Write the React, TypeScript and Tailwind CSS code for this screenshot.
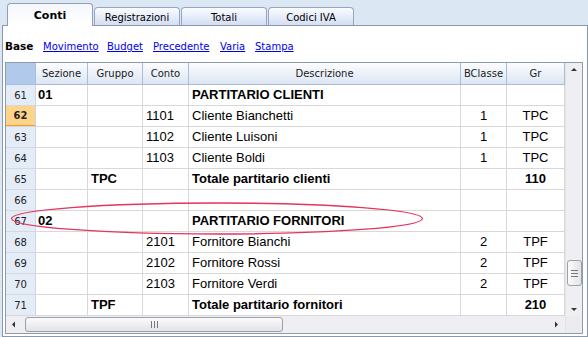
type Row = {
  n: number;
  sez?: string;
  grp?: string;
  conto?: string;
  desc?: string;
  bc?: string;
  gr?: string;
  bold?: boolean;
  sel?: boolean;
};

const rows: Row[] = [
  { n: 61, sez: "01", desc: "PARTITARIO CLIENTI", bold: true },
  { n: 62, conto: "1101", desc: "Cliente Bianchetti", bc: "1", gr: "TPC", sel: true },
  { n: 63, conto: "1102", desc: "Cliente Luisoni", bc: "1", gr: "TPC" },
  { n: 64, conto: "1103", desc: "Cliente Boldi", bc: "1", gr: "TPC" },
  { n: 65, grp: "TPC", desc: "Totale partitario clienti", gr: "110", bold: true },
  { n: 66 },
  { n: 67, sez: "02", desc: "PARTITARIO FORNITORI", bold: true },
  { n: 68, conto: "2101", desc: "Fornitore Bianchi", bc: "2", gr: "TPF" },
  { n: 69, conto: "2102", desc: "Fornitore Rossi", bc: "2", gr: "TPF" },
  { n: 70, conto: "2103", desc: "Fornitore Verdi", bc: "2", gr: "TPF" },
  { n: 71, grp: "TPF", desc: "Totale partitario fornitori", gr: "210", bold: true },
];

const ui = "font-['DejaVu_Sans',sans-serif] text-[10px]";
const cell = "h-full shrink-0 border-r border-[#d8d8d8] flex items-center";
const link = "text-[#0000ee] underline";

const Tab = ({ label, active }: { label: string; active?: boolean }) =>
  active ? (
    <div className="relative z-10 -mb-px flex h-[23px] w-[86px] items-start justify-center rounded-t-[4px] border border-b-0 border-[#919fb8] bg-gradient-to-b from-[#f4f7fc] to-white pt-[4px] text-[11px] font-bold text-black">
      {label}
    </div>
  ) : (
    <div className="ml-px flex h-[18px] w-[86px] items-center justify-center rounded-t-[4px] border border-b-0 border-[#97a6c0] bg-gradient-to-b from-[#fbfcff] to-[#d3def3] pt-px text-black">
      {label}
    </div>
  );

const Head = ({ w, label }: { w: string; label: string }) => (
  <div className={`${w} flex h-full shrink-0 items-center justify-center border-r border-[#a8bed8] text-[#1b1b1b]`}>
    {label}
  </div>
);

export default function App() {
  return (
    <div className={`relative h-[337px] w-[588px] overflow-hidden bg-[#dce7f4] ${ui}`}>
      {/* tabs */}
      <div className="flex h-[25px] items-end pl-[7px]">
        <Tab label="Conti" active />
        <Tab label="Registrazioni" />
        <Tab label="Totali" />
        <Tab label="Codici IVA" />
      </div>

      {/* panel */}
      <div className="ml-[2px] h-[312px] w-[586px] border border-[#8b97aa] bg-white">
        <div className="flex h-[36px] items-center pl-[2px] pt-[5px] text-[10px]">
          <span className="w-[38px] shrink-0 text-[10.5px] font-bold text-black">Base</span>
          <a className={`${link} w-[64px] shrink-0`}>Movimento</a>
          <a className={`${link} w-[46px] shrink-0`}>Budget</a>
          <a className={`${link} w-[67px] shrink-0`}>Precedente</a>
          <a className={`${link} w-[35px] shrink-0`}>Varia</a>
          <a className={link}>Stampa</a>
        </div>

        {/* grid */}
        <div className="ml-[2px] flex h-[272px] w-[578px] border border-[#8e9bad]">
          <div className="flex w-[559px] flex-col">
            <div className="flex h-[22px] border-b border-[#a8bed8] bg-gradient-to-b from-[#fcfdff] to-[#dce6f3]">
              <div className="h-full w-[30px] shrink-0 border-r border-[#a8bed8] bg-[#b1caeb]" />
              <Head w="w-[52px]" label="Sezione" />
              <Head w="w-[55px]" label="Gruppo" />
              <Head w="w-[46px]" label="Conto" />
              <Head w="w-[272px]" label="Descrizione" />
              <Head w="w-[46px]" label="BClasse" />
              <Head w="w-[58px]" label="Gr" />
            </div>

            {rows.map((r) => (
              <div
                key={r.n}
                className={`flex h-[21px] border-b border-[#d8d8d8] font-['Liberation_Sans',Arial,sans-serif] text-[13px] text-black ${r.bold ? "font-bold" : ""}`}
              >
                <div
                  className={`flex h-full w-[30px] shrink-0 items-center justify-center border-r border-[#c9d6e6] ${ui} ${
                    r.sel ? "border-b border-b-[#f29a2c] bg-[#fed38a] font-bold" : "bg-[#e4ecf7] font-normal"
                  } text-[#222]`}
                >
                  {r.n}
                </div>
                <div className={`${cell} w-[52px] pl-[2px]`}>{r.sez}</div>
                <div className={`${cell} w-[55px] pl-[3px]`}>{r.grp}</div>
                <div className={`${cell} w-[46px] pl-[3px]`}>{r.conto}</div>
                <div className={`${cell} w-[272px] pl-[3px]`}>{r.desc}</div>
                <div className={`${cell} w-[46px] justify-center`}>{r.bc}</div>
                <div className={`${cell} w-[58px] justify-center`}>{r.gr}</div>
              </div>
            ))}

            {/* horizontal scrollbar */}
            <div className="relative flex h-[17px] items-center bg-[#efeef2]">
              <svg width="18" height="17" className="shrink-0">
                <path d="M6 8.5 L9 5.5 L9 11.5 Z" fill="#333" />
              </svg>
              <div className="ml-[1px] flex h-[15px] w-[258px] items-center justify-center rounded-[3px] border border-[#9aa1ac] bg-gradient-to-b from-[#fbfbfc] to-[#e2e3e7]">
                <svg width="7" height="7">
                  <path d="M0.5 0 V7 M3.5 0 V7 M6.5 0 V7" stroke="#777" strokeWidth="1" />
                </svg>
              </div>
              <div className="flex-1" />
              <svg width="18" height="17" className="shrink-0">
                <path d="M8 5.5 L11 8.5 L8 11.5 Z" fill="#333" />
              </svg>
            </div>
          </div>

          {/* vertical scrollbar */}
          <div className="flex w-[17px] flex-col border-l border-[#e4e3e8]">
            <div className="flex h-[253px] flex-col items-center bg-[#efeef2]">
              <svg width="16" height="16" className="shrink-0">
                <path d="M5 8 L8 5 L11 8 Z" fill="#333" />
              </svg>
              <div className="flex-1" />
              <div className="flex h-[26px] w-[15px] items-center justify-center rounded-[3px] border border-[#9aa1ac] bg-gradient-to-r from-[#fbfbfc] to-[#e2e3e7]">
                <svg width="7" height="7">
                  <path d="M0 0.5 H7 M0 3.5 H7 M0 6.5 H7" stroke="#777" strokeWidth="1" />
                </svg>
              </div>
              <div className="h-[16px]" />
              <svg width="16" height="14" className="shrink-0">
                <path d="M5 6 L11 6 L8 9 Z" fill="#333" />
              </svg>
            </div>
            <div className="h-[17px] bg-[#ecebef]" />
          </div>
        </div>
      </div>

      {/* annotation */}
      <svg className="pointer-events-none absolute left-[10px] top-[202px]" width="414" height="34">
        <ellipse cx="207" cy="16.5" rx="205.5" ry="15.5" fill="none" stroke="#e4345f" strokeWidth="1.3" />
      </svg>
    </div>
  );
}
